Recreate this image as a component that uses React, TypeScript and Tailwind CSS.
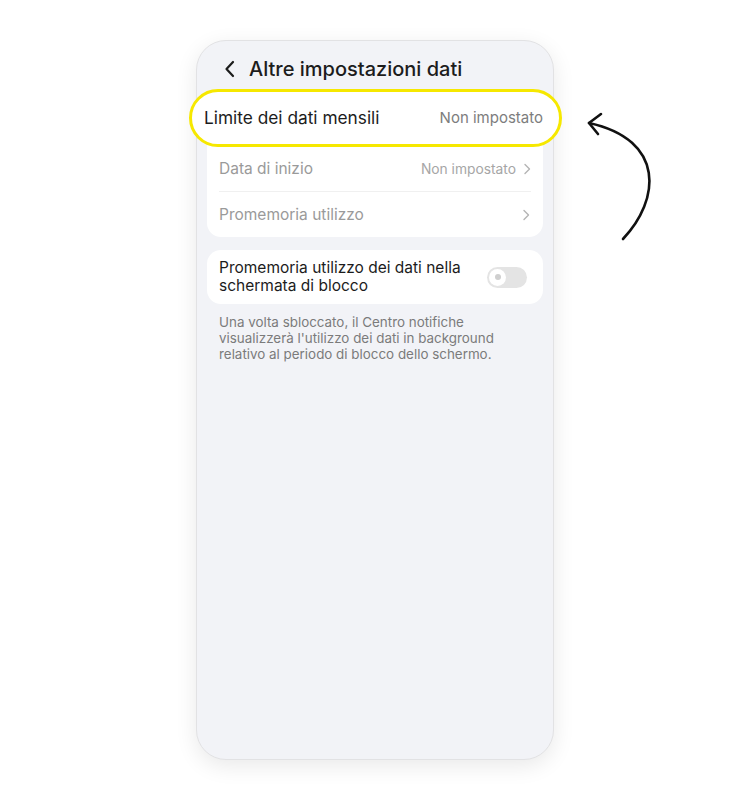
import React from 'react';

const font = { fontFamily: 'Inter, "Noto Sans", Arial, sans-serif' };

const Chevron: React.FC = () => (
  <svg width="8" height="12" viewBox="0 0 8 12" fill="none" stroke="#b4b4b4" strokeWidth="1.4" strokeLinecap="round" strokeLinejoin="round">
    <path d="M2 1.5 6.5 6 2 10.5" />
  </svg>
);

const App: React.FC = () => {
  return (
    <div className="relative w-[750px] h-[800px] bg-white flex justify-center pt-[40px]" style={font}>
      {/* Phone */}
      <div className="relative w-[358px] h-[720px] rounded-[30px] bg-[#f2f3f7] border border-[#e2e2e4] shadow-[0_6px_22px_rgba(0,0,0,0.09)] px-[10px]">
        {/* Header */}
        <div className="h-[54px] flex items-center pl-[17px] pt-[1px] gap-[13px]">
          <svg width="12" height="18" viewBox="0 0 12 18" fill="none" stroke="#1c1c1c" strokeWidth="2.2" strokeLinecap="round" strokeLinejoin="round">
            <path d="M9 2 2.5 9 9 16" />
          </svg>
          <h1 className="text-[20px] font-medium text-[#1c1c1c]">Altre impostazioni dati</h1>
        </div>

        {/* Card 1 (first row sits under the highlight) */}
        <div className="mt-[5px] bg-white rounded-[14px] px-[12px]">
          <div className="h-[46px]" />
          <div className="h-[45px] flex items-center justify-between border-t border-[#f0f0f0]">
            <span className="text-[15.5px] text-[#9a9a9a]">Data di inizio</span>
            <span className="flex items-center gap-[7px] text-[13.8px] text-[#a6a6a6]">
              Non impostato
              <Chevron />
            </span>
          </div>
          <div className="h-[46px] flex items-center justify-between border-t border-[#f0f0f0]">
            <span className="text-[15.5px] text-[#9a9a9a]">Promemoria utilizzo</span>
            <span className="pr-[1px]">
              <Chevron />
            </span>
          </div>
        </div>

        {/* Card 2 */}
        <div className="mt-[13px] bg-white rounded-[14px] pl-[12px] pr-[16px] py-[9px] flex items-center justify-between">
          <span className="text-[15.5px] leading-[18px] text-[#1c1c1c] w-[262px]">
            Promemoria utilizzo dei dati nella schermata di blocco
          </span>
          <div className="w-[40px] h-[21px] rounded-full bg-[#e4e4e4] flex items-center pl-[2px]">
            <div className="w-[17px] h-[17px] rounded-full bg-white flex items-center justify-center">
              <div className="w-[6px] h-[6px] rounded-full bg-[#cfcfcf]" />
            </div>
          </div>
        </div>

        <p className="mt-[10px] pl-[12px] pr-[24px] text-[13.4px] leading-[16px] text-[#7b7b7b]">
          Una volta sbloccato, il Centro notifiche visualizzerà l'utilizzo dei dati in background relativo al periodo di blocco dello schermo.
        </p>

        {/* Highlight overlay */}
        <div className="absolute left-[-8px] top-[48px] w-[373px] h-[58px] rounded-full border-[3px] border-[#f6e800] bg-white flex items-center justify-between pl-[12px] pr-[16px]">
          <span className="text-[17.3px] text-[#1c1c1c]">Limite dei dati mensili</span>
          <span className="text-[15px] text-[#7d7d7d]">Non impostato</span>
        </div>
      </div>

      {/* Annotation arrow */}
      <svg className="absolute left-[570px] top-[100px]" width="100" height="150" viewBox="570 100 100 150" fill="none" stroke="#111" strokeWidth="2.6" strokeLinecap="round" strokeLinejoin="round">
        <path d="M623 239 C 660 200 666 140 589 123" />
        <path d="M601 114 L589 123 L598 134" />
      </svg>
    </div>
  );
};

export default App;
